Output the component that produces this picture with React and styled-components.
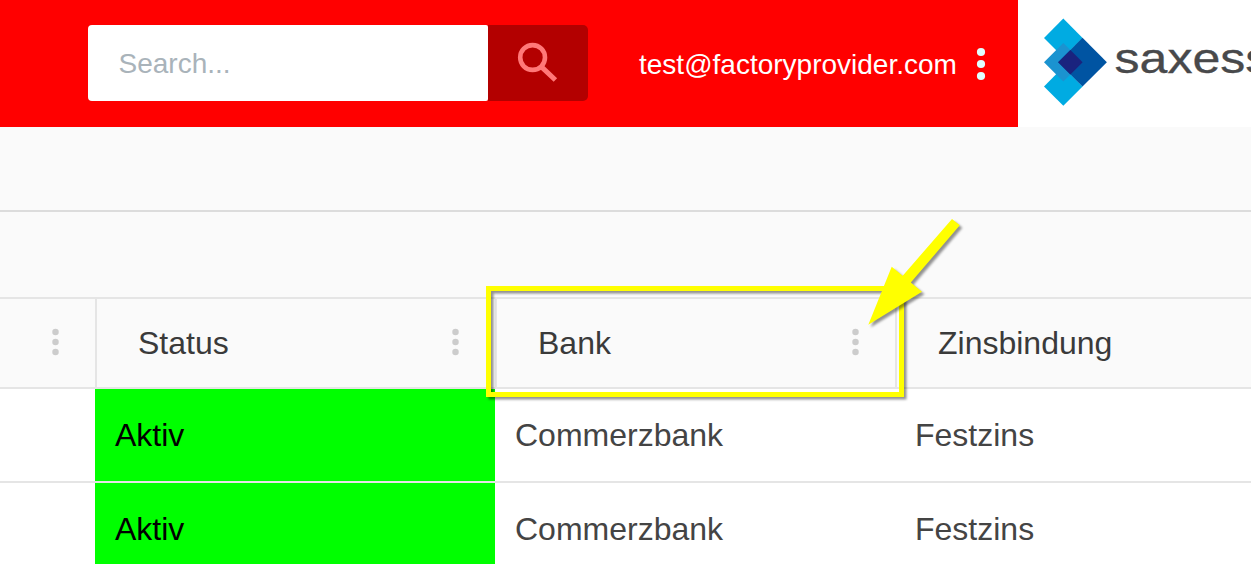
import React from "react";
import styled, { createGlobalStyle } from "styled-components";

const GlobalStyle = createGlobalStyle`
  *, *::before, *::after { box-sizing: border-box; }
  body {
    margin: 0;
    overflow: hidden;
    background: #fff;
    font-family: "Liberation Sans", Arial, sans-serif;
  }
`;

const Page = styled.div`
  position: relative;
  width: 1251px;
  height: 564px;
  overflow: hidden;
  display: flex;
  flex-direction: column;
`;

const TopBar = styled.header`
  display: flex;
  flex: 0 0 127px;
  background: #fff;
`;

const AppBar = styled.div`
  display: flex;
  align-items: flex-start;
  flex: 0 0 1018px;
  padding: 25px 0 0 88px;
  background: #ff0000;
`;

const SearchForm = styled.div`
  display: flex;
  height: 76px;
`;

const SearchInput = styled.input`
  width: 400px;
  height: 76px;
  margin: 0;
  padding: 2px 30px 0 30.5px;
  border: 0;
  outline: 0;
  border-radius: 4px 2px 2px 4px;
  background: #fff;
  font: 28px "Liberation Sans", Arial, sans-serif;
  color: #444;
  &::placeholder {
    color: #a9b3ba;
    opacity: 1;
  }
`;

const SearchButton = styled.button`
  width: 100px;
  height: 76px;
  padding: 0;
  border: 0;
  border-radius: 0 5px 5px 0;
  background: #b30000;
  svg { display: block; }
`;

const Account = styled.div`
  display: flex;
  align-items: center;
  height: 78px;
  margin-left: 51px;
  color: #fff;
  font-size: 28px;
  white-space: nowrap;
`;

const UserName = styled.span`
  width: 318px;
  padding-top: 2px;
`;

const MenuDots = styled.svg`
  display: block;
  fill: ${(p) => p.$color};
`;

const AccountMenu = styled.div`
  margin-left: 19px;
`;

const Brand = styled.div`
  flex: 1;
  overflow: hidden;
  svg { display: block; }
`;

const Strip = styled.div`
  flex: 0 0 ${(p) => p.$height}px;
  background: #fafafa;
  border-bottom: 2px solid ${(p) => p.$line};
`;

const Row = styled.div`
  display: grid;
  grid-template-columns: 95px 400px 400px 400px;
  flex: 0 0 ${(p) => p.$height}px;
  border-bottom: 2px solid #e5e5e5;
  background: ${(p) => (p.$head ? "#fafafa" : "#fff")};
`;

const HeadCell = styled.div`
  display: flex;
  align-items: center;
  justify-content: ${(p) => (p.$blank ? "flex-end" : "space-between")};
  padding: 0 35px 0 ${(p) => (p.$blank ? 0 : 41)}px;
  border-left: ${(p) => (p.$blank ? "0" : "2px solid #e5e5e5")};
  font-size: 32px;
  color: #3a3a3a;
`;

const DotsSlot = styled.span`
  padding-bottom: 2px;
`;

const Cell = styled.div`
  display: flex;
  align-items: center;
  padding-left: 20px;
  font-size: 32px;
  background: ${(p) => (p.$active ? "#00ff00" : "transparent")};
  color: ${(p) => (p.$active ? "#000" : "#444")};
`;

const Annotation = styled.svg`
  position: absolute;
  left: 480px;
  top: 210px;
  pointer-events: none;
`;

function Dots({ radius = 3.25, pitch = 10, width = 9, color = "#ccc" }) {
  const height = pitch * 2 + 10;
  return (
    <MenuDots width={width} height={height} $color={color}>
      {[-1, 0, 1].map((n) => (
        <circle key={n} cx={width / 2} cy={height / 2 + n * pitch} r={radius} />
      ))}
    </MenuDots>
  );
}

function SearchIcon() {
  return (
    <svg width="100" height="76" viewBox="0 0 100 76" fill="none" stroke="#ff7878">
      <circle cx="44.6" cy="32.5" r="12.4" strokeWidth="4.6" />
      <path d="M53.2 41.6L56.4 44.6L67.4 55" strokeWidth="5" />
    </svg>
  );
}

function Logo() {
  return (
    <svg width="233" height="127" viewBox="1018 0 233 127">
      <path d="M1044 38L1063.3 18.6L1082.6 38L1063.3 57.3Z" fill="#00abe2" />
      <path d="M1044 86.4L1063.3 67L1082.6 86.4L1063.3 105.7Z" fill="#00abe2" />
      <path d="M1044 62.2L1063.3 42.9L1082.6 62.2L1063.3 81.5Z" fill="#1b93d0" />
      <path d="M1058.1 62.2L1082.5 37.8L1106.9 62.2L1082.5 86.6Z" fill="#0054a2" />
      <path d="M1058.1 62.2L1070.4 50L1082.6 62.2L1070.4 74.4Z" fill="#1a237e" />
      <text
        transform="translate(1114.5 73.3) scale(1.165 1)"
        fontFamily="Liberation Sans, Arial, sans-serif"
        fontSize="43"
        fill="#48494b"
        stroke="#48494b"
        strokeWidth="0.3"
      >
        saxess
      </text>
    </svg>
  );
}

const columns = ["Status", "Bank", "Zinsbindung"];
const rows = [
  ["Aktiv", "Commerzbank", "Festzins"],
  ["Aktiv", "Commerzbank", "Festzins"],
];

export default function App() {
  return (
    <>
      <GlobalStyle />
      <Page>
        <TopBar>
          <AppBar>
            <SearchForm>
              <SearchInput placeholder="Search..." />
              <SearchButton aria-label="Search">
                <SearchIcon />
              </SearchButton>
            </SearchForm>
            <Account>
              <UserName>test@factoryprovider.com</UserName>
              <AccountMenu>
                <Dots radius={4.1} pitch={12} width={10} color="#e0ffff" />
              </AccountMenu>
            </Account>
          </AppBar>
          <Brand>
            <Logo />
          </Brand>
        </TopBar>
        <Strip $height={85} $line="#dcdcdc" />
        <Strip $height={87} $line="#e5e5e5" />
        <Row $head $height={90}>
          <HeadCell $blank>
            <DotsSlot>
              <Dots />
            </DotsSlot>
          </HeadCell>
          {columns.map((name) => (
            <HeadCell key={name}>
              {name}
              <DotsSlot>
                <Dots />
              </DotsSlot>
            </HeadCell>
          ))}
        </Row>
        {rows.map((row, i) => (
          <Row key={i} $height={94}>
            <Cell />
            {row.map((value, j) => (
              <Cell key={j} $active={j === 0}>
                {value}
              </Cell>
            ))}
          </Row>
        ))}
        <Annotation width="500" height="200" viewBox="480 210 500 200">
          <defs>
            <filter
              id="shadow"
              filterUnits="userSpaceOnUse"
              x="480"
              y="210"
              width="500"
              height="200"
              colorInterpolationFilters="sRGB"
            >
              <feDropShadow dx="2.5" dy="2.5" stdDeviation="1.2" floodColor="#000" floodOpacity="0.42" />
            </filter>
          </defs>
          <rect
            x="488.5"
            y="288.5"
            width="413"
            height="106"
            fill="none"
            stroke="#ffff00"
            strokeWidth="5"
            filter="url(#shadow)"
          />
          <path
            d="M868.3 324.7L891.7 266.7L902.7 275.7L952 219L959.8 225.3L910.8 282.5L922 291.7Z"
            fill="#ffff00"
            filter="url(#shadow)"
          />
        </Annotation>
      </Page>
    </>
  );
}
